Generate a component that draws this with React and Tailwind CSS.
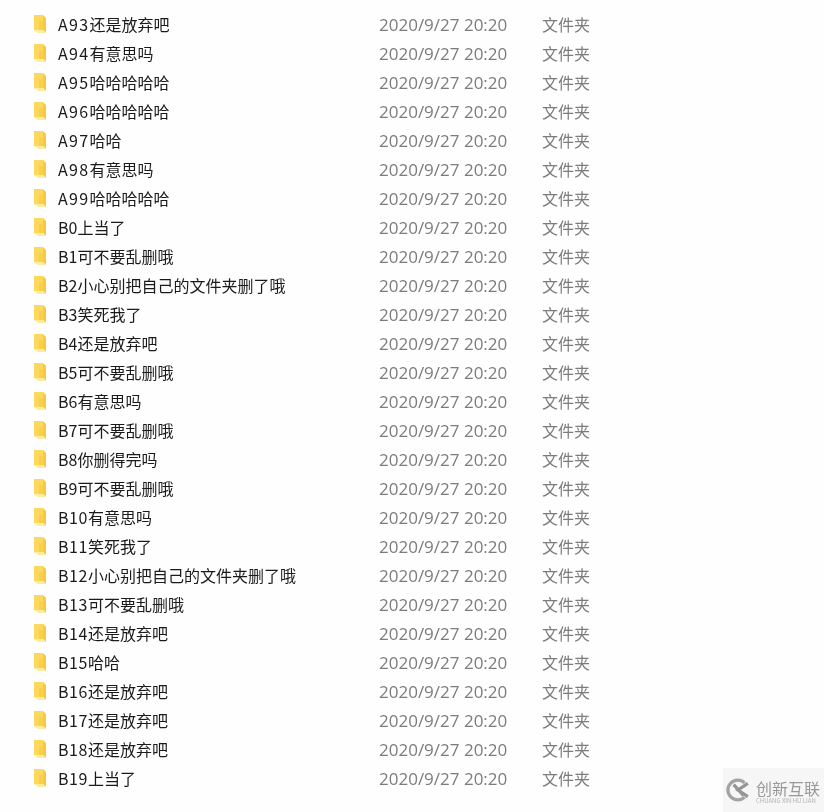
const names = [
  'A93还是放弃吧', 'A94有意思吗', 'A95哈哈哈哈哈', 'A96哈哈哈哈哈', 'A97哈哈', 'A98有意思吗', 'A99哈哈哈哈哈',
  'B0上当了', 'B1可不要乱删哦', 'B2小心别把自己的文件夹删了哦', 'B3笑死我了', 'B4还是放弃吧', 'B5可不要乱删哦',
  'B6有意思吗', 'B7可不要乱删哦', 'B8你删得完吗', 'B9可不要乱删哦', 'B10有意思吗', 'B11笑死我了',
  'B12小心别把自己的文件夹删了哦', 'B13可不要乱删哦', 'B14还是放弃吧', 'B15哈哈', 'B16还是放弃吧',
  'B17还是放弃吧', 'B18还是放弃吧', 'B19上当了',
];

const FolderIcon = () => (
  <svg width="14" height="18" viewBox="0 0 14 18" className="shrink-0">
    <path d="M1 0h9v15H1z" fill="#fdd85e" />
    <path d="M10 0l3 3v15l-3-3z" fill="#f8c93f" />
    <path d="M1 15h9l3 3H5z" fill="#fcec9f" />
    <path d="M6 6h4v9H6z" fill="#fbcf48" />
  </svg>
);

const Name = ({ value }) => {
  const prefix = value.match(/^[A-Z0-9]+/)[0];
  const rest = value.slice(prefix.length);
  return (
    <div className="w-[321px] text-base leading-[20px] text-[#1a1a1a] whitespace-nowrap">
      <span className={prefix.startsWith('A') ? 'tracking-[1.3px]' : prefix.length > 2 ? 'tracking-[0.6px]' : ''}>{prefix}</span>
      {rest}
    </div>
  );
};

const App = () => {
  return (
    <div className="relative w-[824px] h-[812px] overflow-hidden bg-[#fefefe] font-['Noto_Sans_CJK_SC','Noto_Sans',sans-serif]">
      <div className="flex flex-col pt-[11px] pl-[33px] blur-[0.4px]">
        {names.map((name, idx) => (
          <div key={idx} className="flex items-center h-[29px]">
            <div className="w-[25px] -mt-[3px]">
              <FolderIcon />
            </div>
            <div className="-mt-[4px]">
              <Name value={name} />
            </div>
            <div className="w-[163px] -mt-[2px] text-[17px] text-[#7c7c7c] whitespace-nowrap font-['Open_Sans',sans-serif]">2020/9/27 20:20</div>
            <div className="-mt-[4px] text-base text-[#7c7c7c] whitespace-nowrap">文件夹</div>
          </div>
        ))}
      </div>

      {/* watermark */}
      <div className="absolute right-0 bottom-0 w-[101px] h-[44px] bg-[#f6f6f6] flex items-center pl-[3px] gap-[6px] opacity-90">
        <svg width="24" height="24" viewBox="0 0 22 22" className="shrink-0">
          <path d="M17 4.5A9 9 0 1 0 17 17.5" fill="none" stroke="#9a9a9a" strokeWidth="3" />
          <path d="M7 6l9 10M20 5l-9 6 9 6" fill="none" stroke="#8a8a8a" strokeWidth="3" />
        </svg>
        <div className="flex flex-col pt-[3px]">
          <span className="text-[16px] leading-[16px] text-[#8e8e8e] whitespace-nowrap">创新互联</span>
          <span className="mt-[1px] text-[6px] leading-[7px] text-[#aaaaaa] whitespace-nowrap">CHUANG XIN HU LIAN</span>
        </div>
      </div>
    </div>
  );
};

export default App;
